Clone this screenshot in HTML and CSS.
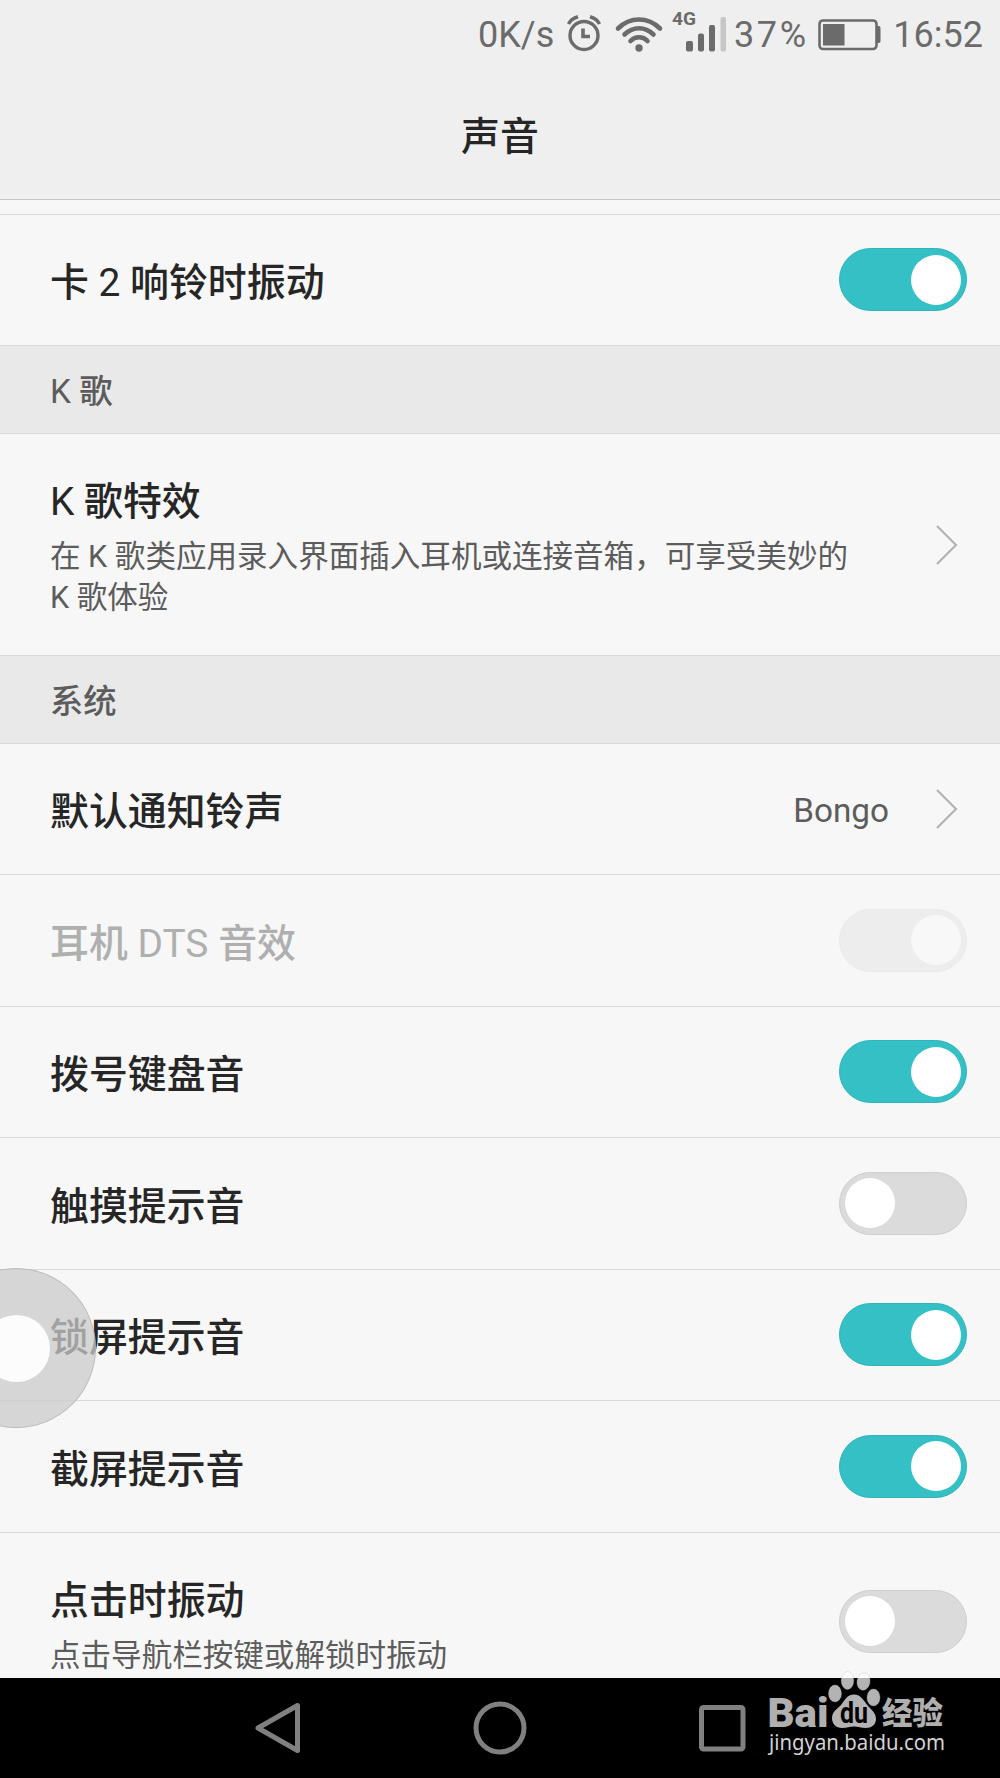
FILE: index.html
```html
<!DOCTYPE html>
<html lang="zh-CN">
<head>
<meta charset="utf-8">
<title>声音</title>
<link rel="stylesheet" href="styles.css">
</head>
<body>
<div class="screen">
  <header class="header">
    <div class="status">
      <span class="speed">0K/s</span>
      <svg class="alarm" width="34" height="36" viewBox="0 0 34 36" fill="none" stroke="#6b6b6b">
        <circle cx="17" cy="20.500" r="14" stroke-width="3.400"/>
        <path d="M16 13.500V21.500H23" stroke-width="3.600"/>
        <path d="M1.500 9Q4.500 3.500 11 1.800M32.500 9Q29.500 3.500 23 1.800" stroke-width="3.600"/>
      </svg>
      <svg class="wifi" width="48" height="36" viewBox="0 0 48 36" fill="none" stroke="#6b6b6b" stroke-width="4.600" stroke-linecap="round">
        <path d="M3 12.500Q12 3.500 24 3.500T45 12.500"/>
        <path d="M9.500 18.500Q16 12.300 24 12.300T38.500 18.500"/>
        <path d="M15.500 25Q19 21.300 24 21.300T32.500 25"/>
        <circle cx="24" cy="32" r="3.700" fill="#6b6b6b" stroke="none"/>
      </svg>
      <svg class="signal" width="56" height="44" viewBox="0 0 56 44" fill="#6b6b6b">
        <text x="0" y="16" class="net" textLength="24" lengthAdjust="spacingAndGlyphs">4G</text>
        <rect x="14" y="32" width="7" height="10.500" rx="2"/>
        <rect x="26" y="24.500" width="6" height="18" rx="2"/>
        <rect x="37" y="16" width="6" height="26.500" rx="2"/>
        <rect x="48.500" y="8" width="5.500" height="34.500" rx="2" fill="#c6c6c6"/>
      </svg>
      <span class="percent">37%</span>
      <svg class="battery" width="63" height="32" viewBox="0 0 63 32">
        <rect x="1.500" y="1.500" width="57" height="28.500" rx="3.500" fill="none" stroke="#6b6b6b" stroke-width="2.600"/>
        <rect x="5" y="5" width="21.500" height="21.500" fill="#6b6b6b"/>
        <path d="M59 7H61Q62.500 7 62.500 9V22Q62.500 24 61 24H59Z" fill="#6b6b6b"/>
      </svg>
      <span class="clock">16:52</span>
    </div>
    <h1 class="title">声音</h1>
  </header>

  <main class="list">
    <div class="peek"></div>
    <div class="row"><span class="label">卡 <span class="latin">2</span> 响铃时振动</span><span class="toggle on"></span></div>
    <h2 class="section"><span><span class="latin">K</span> 歌</span></h2>
    <div class="row tall">
      <div class="texts">
        <span class="label"><span class="latin">K</span> 歌特效</span>
        <p class="summary">在 K 歌类应用录入界面插入耳机或连接音箱，可享受美妙的<br>K 歌体验</p>
      </div>
      <svg class="chevron" width="24" height="42" viewBox="0 0 24 42"><path d="M2 2L21 21L2 40"/></svg>
    </div>
    <h2 class="section">系统</h2>
    <div class="row ring">
      <span class="label">默认通知铃声</span>
      <span class="value">Bongo</span>
      <svg class="chevron" width="24" height="42" viewBox="0 0 24 42"><path d="M2 2L21 21L2 40"/></svg>
    </div>
    <div class="row roomy disabled"><span class="label">耳机 <span class="latin">DTS</span> 音效</span><span class="toggle on"></span></div>
    <div class="row"><span class="label">拨号键盘音</span><span class="toggle on"></span></div>
    <div class="row roomy"><span class="label">触摸提示音</span><span class="toggle"></span></div>
    <div class="row"><span class="label">锁屏提示音</span><span class="toggle on"></span></div>
    <div class="row roomy"><span class="label">截屏提示音</span><span class="toggle on"></span></div>
    <div class="row last">
      <div class="texts">
        <span class="label">点击时振动</span>
        <p class="summary">点击导航栏按键或解锁时振动</p>
      </div>
      <span class="toggle"></span>
    </div>
  </main>

  <nav class="nav">
    <svg width="48" height="54" viewBox="0 0 48 54"><path d="M43.500 4.500V49.500L4 27Z"/></svg>
    <svg width="54" height="54" viewBox="0 0 54 54"><circle cx="27" cy="27" r="24"/></svg>
    <svg width="48" height="48" viewBox="0 0 48 48"><rect x="3.500" y="3.500" width="41.500" height="41.500" rx="2"/></svg>
  </nav>

  <div class="float-ball"></div>

  <svg class="watermark" width="200" height="100" viewBox="756 1668 200 100">
    <g fill="#fff" fill-opacity=".7">
      <text class="bai" x="767.500" y="1726.500" textLength="61" lengthAdjust="spacingAndGlyphs">Bai</text>
      <g stroke="#bbb" stroke-opacity=".4" stroke-width=".8">
        <ellipse cx="835" cy="1693.500" rx="6.500" ry="8.500"/>
        <ellipse cx="847.500" cy="1680.500" rx="6.300" ry="9"/>
        <ellipse cx="863.500" cy="1681.500" rx="6.500" ry="8.800" transform="rotate(8 863.500 1681.500)"/>
        <ellipse cx="873.500" cy="1697.500" rx="6.500" ry="8.500"/>
      </g>
      <path d="M854 1694.500C861 1694.500 864 1701 868 1706C873 1711 876 1714 876 1719C876 1725 871 1728 866 1728C861 1728 858 1726.500 854 1726.500S847 1728 842 1728C836 1728 832 1724 832 1718C832 1712 837 1709 841 1705C845 1700 847 1694.500 854 1694.500Z"/>
    </g>
    <text class="du" x="840" y="1722.500" textLength="28" lengthAdjust="spacingAndGlyphs">du</text>
    <text class="jing" x="882" y="1724" textLength="61" lengthAdjust="spacingAndGlyphs">经验</text>
    <text class="url" x="769" y="1750" textLength="176" lengthAdjust="spacingAndGlyphs">jingyan.baidu.com</text>
  </svg>
</div>
</body>
</html>
```
FILE: styles.css
```css
* { box-sizing: border-box; }

body {
  margin: 0;
  background: #f7f7f7;
  font-family: Roboto, "Noto Sans CJK SC", sans-serif;
}

.screen {
  position: relative;
  display: flex;
  flex-direction: column;
  width: 1000px;
  height: 1778px;
  overflow: hidden;
}

.header {
  height: 200px;
  flex: none;
  background: #efefef;
  border-bottom: 1px solid #c6c6c6;
}

.status {
  display: flex;
  align-items: flex-start;
  height: 70px;
  padding: 0 17px 0 478px;
  color: #6b6b6b;
  font-size: 36px;
  line-height: 70px;
  white-space: nowrap;
}
.status svg { flex: none; overflow: visible; }
.speed { width: 89px; }
.alarm { margin-top: 15px; }
.wifi { margin: 16px 0 0 14px; }
.signal { margin: 8.500px 0 0 9px; }
.percent { width: 84px; margin-left: 6px; letter-spacing: 2.6px; }
.battery { margin-top: 19px; }
.clock { margin-left: auto; }
.net { font: bold 19px Roboto, sans-serif; }

.title {
  margin: 0;
  padding-top: 32px;
  color: #262626;
  font-size: 38.9px;
  font-weight: 500;
  line-height: 70px;
  text-align: center;
}

.list {
  flex: none;
  height: 1478px;
  overflow: hidden;
}
.peek { height: 15px; border-bottom: 1px solid #d9d9d9; }

.row {
  display: flex;
  align-items: center;
  height: 131px;
  padding: 0 33px 1px 50px;
  border-bottom: 1px solid #d9d9d9;
}
.row.roomy { height: 132px; }
.row.tall { height: 222px; padding-bottom: 0; }
.row.last { height: 176px; padding-bottom: 0; border: 0; }

.label {
  display: block;
  flex: 1;
  color: #262626;
  font-size: 38.9px;
  font-weight: 500;
  line-height: 56px;
  padding-top: 6px;
  white-space: nowrap;
}
.roomy .label { padding-top: 7px; }
.latin { font-weight: 400; }
.texts {
  flex: 1;
  align-self: flex-start;
  padding-top: 40px;
}
.texts .label { padding-top: 0; }
.summary {
  margin: 0;
  padding-top: 5.5px;
  color: #5c5c5c;
  font-size: 30.56px;
  line-height: 41.5px;
  white-space: nowrap;
}
.disabled .label { color: #afafaf; }
.value {
  margin-right: 46px;
  padding-top: 4px;
  color: #5c5c5c;
  font-size: 33.3px;
}

.section {
  display: flex;
  align-items: center;
  height: 88px;
  margin: 0;
  padding: 0 0 2px 50px;
  background: #e9e9e9;
  border-bottom: 1px solid #dadada;
  color: #5c5c5c;
  font-size: 33.3px;
  font-weight: 500;
}

.chevron { margin-right: 8px; flex: none; }
.chevron path { fill: none; stroke: #b1b1b1; stroke-width: 2; }

.toggle {
  flex: none;
  display: flex;
  align-items: center;
  width: 128px;
  height: 63px;
  padding: 0 5px;
  border: 1px solid #cecece;
  border-radius: 32px;
  background: #dbdbdb;
}
.toggle::before {
  content: "";
  width: 50px;
  height: 50px;
  border-radius: 50%;
  background: #fff;
}
.toggle.on {
  justify-content: flex-end;
  background: #35c0c6;
  border-color: #2fb4ba;
}
.disabled .toggle { background: #ededed; border-color: #eaeaea; }
.disabled .toggle::before { background: #f8f8f8; }

.nav {
  display: flex;
  align-items: center;
  justify-content: space-between;
  flex: 1;
  padding: 0 254px;
  background: #000;
}
.nav svg * {
  fill: none;
  stroke: #808080;
  stroke-width: 5;
  stroke-linejoin: round;
}

.float-ball {
  position: absolute;
  left: -64px;
  top: 1268px;
  display: flex;
  align-items: center;
  justify-content: center;
  width: 160px;
  height: 160px;
  border: 1px solid rgba(180, 180, 180, .75);
  border-radius: 50%;
  background: rgba(203, 203, 203, .75);
}
.float-ball::before {
  content: "";
  width: 67px;
  height: 67px;
  border-radius: 50%;
  background: #fcfcfc;
}

.watermark {
  position: absolute;
  left: 756px;
  top: 1668px;
  overflow: visible;
}
.bai { font: 900 40px Roboto, sans-serif; }
.du { font: 700 29px Roboto, sans-serif; fill: #000; }
.jing { font: 900 31px "Noto Sans CJK SC", sans-serif; fill: #fff; fill-opacity: .7; }
.url { font: 400 22.5px "Noto Sans", sans-serif; fill: #d2d2d2; }
```
